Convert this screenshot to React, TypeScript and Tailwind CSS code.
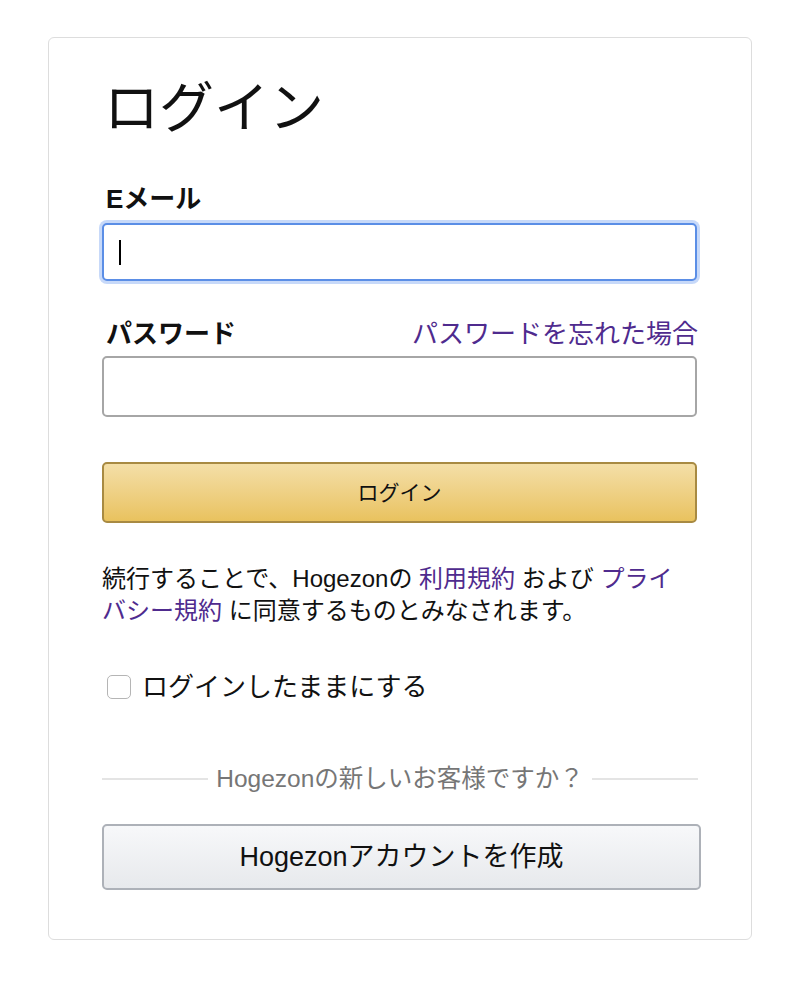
import { useState } from 'react'

const font = { fontFamily: '"Liberation Sans", "Noto Sans CJK JP", sans-serif' }

export default function App() {
  const [keep, setKeep] = useState(false)

  return (
    <div className="min-h-screen bg-white pt-[37px] pl-[48px]" style={font}>
      <div className="w-[704px] border border-[#dddddd] rounded-[6px] px-[53px] pt-[38px] pb-[49px] text-[#111111]">
        {/* Title */}
        <h1 className="pl-[2px] text-[55px] leading-[64px] font-normal">ログイン</h1>

        {/* Email */}
        <label className="block pl-[4px] mt-[44px] text-[26px] leading-[30px] font-bold">Eメール</label>
        <div className="relative mt-[9px]">
          <input
            className="block w-[595px] h-[58px] px-[14px] rounded-[5px] border-2 border-[#5b8ee6] shadow-[0_0_0_3px_#c7d9f9] bg-white text-[24px] outline-none"
          />
          {/* caret */}
          <span className="pointer-events-none absolute left-[17px] top-[17px] w-[2px] h-[25px] bg-black" />
        </div>

        {/* Password */}
        <div className="mt-[38px] flex items-end justify-between">
          <label className="pl-[4px] text-[26px] leading-[30px] font-bold">パスワード</label>
          <a href="#" className="text-[26px] leading-[30px] text-[#4f2b8e]">パスワードを忘れた場合</a>
        </div>
        <input
          type="password"
          className="mt-[7px] block w-[595px] h-[61px] px-[14px] rounded-[5px] border-2 border-[#a6a6a6] bg-white text-[24px] outline-none"
        />

        {/* Login button */}
        <button className="mt-[45px] block w-[595px] h-[61px] rounded-[5px] border-2 border-[#a88a42] bg-gradient-to-b from-[#f4dfa7] to-[#e9c25e] text-[21px] text-[#111111]">
          ログイン
        </button>

        {/* Terms */}
        <p className="mt-[40px] text-[24px] leading-[32px] w-[586px]">
          続行することで、Hogezonの <a href="#" className="text-[#4f2b8e]">利用規約</a> および <a href="#" className="text-[#4f2b8e]">プライバシー規約</a> に同意するものとみなされます。
        </p>

        {/* Keep signed in */}
        <label className="mt-[44px] ml-[5px] flex items-center gap-[11px] text-[26px] leading-[32px] cursor-pointer">
          <span
            onClick={() => setKeep(!keep)}
            className="w-[24px] h-[24px] rounded-[5px] border border-[#b5b5b5] bg-white flex items-center justify-center"
          >
            {keep && <span className="text-[16px] leading-none">✓</span>}
          </span>
          ログインしたままにする
        </label>

        {/* Divider */}
        <div className="mt-[61px] flex items-center gap-[8px]">
          <div className="flex-1 h-0 border-t-2 border-[#e4e4e4]" />
          <span className="text-[24.5px] leading-[30px] text-[#767676]">Hogezonの新しいお客様ですか？</span>
          <div className="flex-1 h-0 border-t-2 border-[#e4e4e4]" />
        </div>

        {/* Create account */}
        <button className="mt-[30px] block w-[599px] h-[66px] rounded-[5px] border-2 border-[#adb1b8] bg-gradient-to-b from-[#f7f8fa] to-[#e7e9ec] text-[27px] text-[#111111]">
          Hogezonアカウントを作成
        </button>
      </div>
    </div>
  )
}
